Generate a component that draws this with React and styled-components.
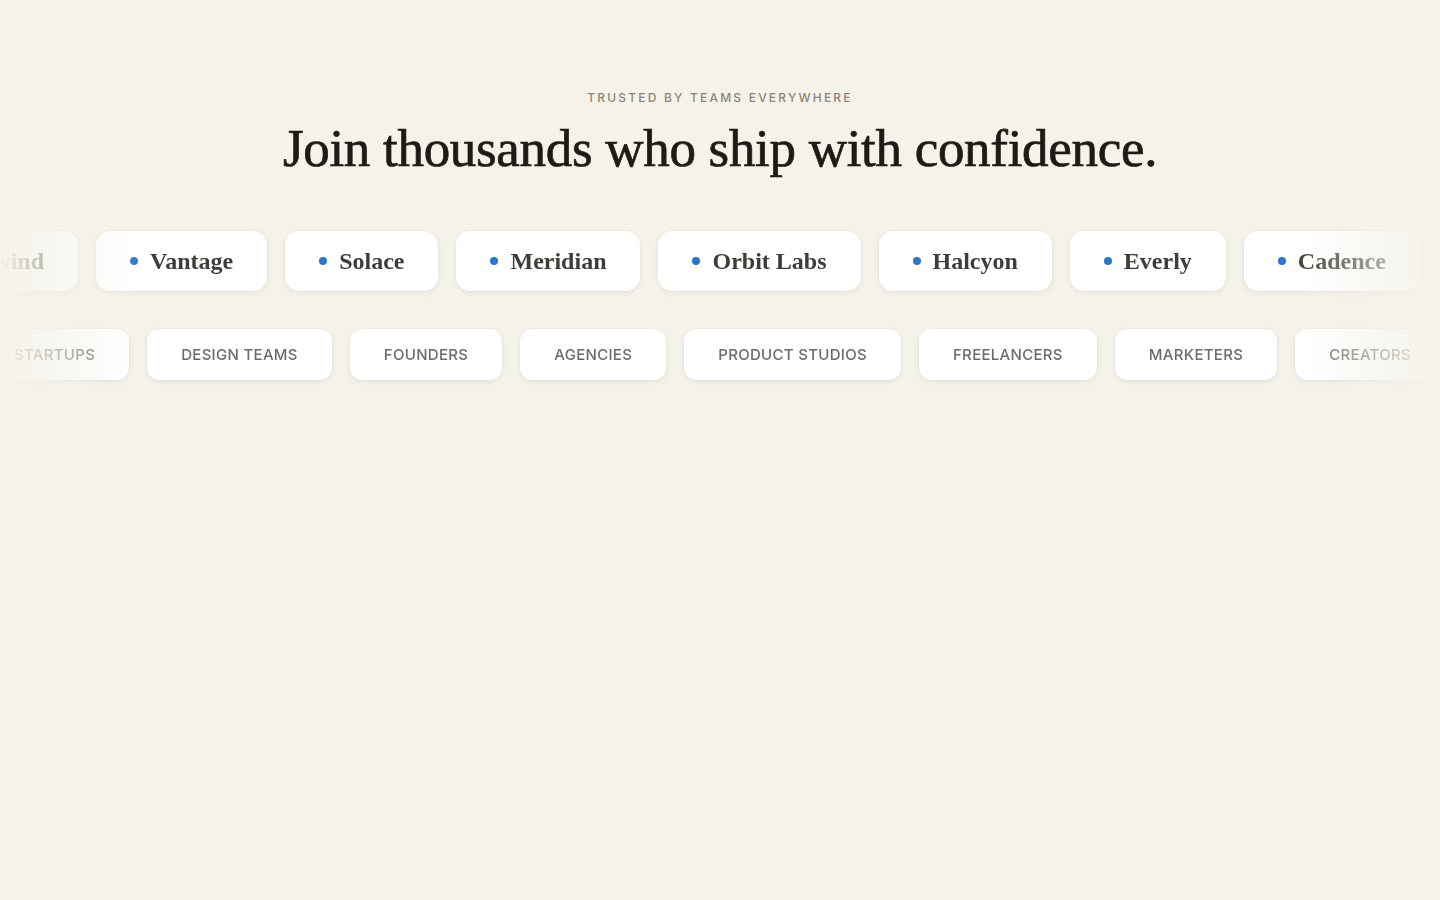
import React from "react";
import styled, { createGlobalStyle } from "styled-components";

const Global = createGlobalStyle`
  html, body { margin: 0; padding: 0; background: #f5f2ea; }
  body { font-family: "Inter", "Liberation Sans", sans-serif; -webkit-font-smoothing: antialiased; }
  * { box-sizing: border-box; }
`;

const Page = styled.main`
  min-height: 900px;
  background: #f5f2ea;
  padding-top: 89px;
  display: flex;
  flex-direction: column;
  align-items: center;
  overflow: hidden;
`;

const Eyebrow = styled.p`
  margin: 0;
  font-family: "Inter", "Liberation Sans", sans-serif;
  font-size: 12px;
  line-height: 18px;
  font-weight: 500;
  letter-spacing: 2.2px;
  text-transform: uppercase;
  color: #8b8576;
`;

const Heading = styled.h2`
  margin: 10px 0 0;
  font-family: "Liberation Serif", "Times New Roman", serif;
  font-weight: 400;
  font-size: 53px;
  line-height: 62px;
  letter-spacing: -0.3px;
  color: #1e1b16;
  -webkit-text-stroke: 0.7px #1e1b16;
  text-align: center;
`;

const Marquee = styled.div`
  width: 100%;
  overflow: hidden;
  margin-top: ${(p) => p.$top}px;
  padding: 4px 0 8px;
  -webkit-mask-image: linear-gradient(to right, transparent 0, #000 10%, #000 90%, transparent 100%);
  mask-image: linear-gradient(to right, transparent 0, #000 10%, #000 90%, transparent 100%);
`;

const Track = styled.div`
  display: flex;
  gap: 18px;
  width: max-content;
  transform: translateX(${(p) => p.$offset}px);
`;

const Chip = styled.div`
  flex-shrink: 0;
  height: 60px;
  padding: 0 34px;
  display: flex;
  align-items: center;
  gap: 12px;
  background: #ffffff;
  border-radius: 14px;
  box-shadow: 0 0 0 1px rgba(60, 50, 30, 0.03), 0 2px 6px rgba(60, 50, 30, 0.07);
  font-family: "Liberation Serif", "Times New Roman", serif;
  font-weight: 700;
  font-size: 24px;
  color: #403d38;
  white-space: nowrap;
`;

const Dot = styled.span`
  width: 8px;
  height: 8px;
  border-radius: 50%;
  background: #2a76cf;
  flex-shrink: 0;
`;

const Pill = styled.div`
  flex-shrink: 0;
  height: 51px;
  padding: 0 34px;
  display: flex;
  align-items: center;
  background: #ffffff;
  border-radius: 12px;
  box-shadow: 0 0 0 1px rgba(60, 50, 30, 0.03), 0 2px 6px rgba(60, 50, 30, 0.07);
  font-family: "Inter", "Liberation Sans", sans-serif;
  font-weight: 500;
  font-size: 15px;
  letter-spacing: 0.3px;
  text-transform: uppercase;
  color: #6e6c68;
  white-space: nowrap;
`;

const companies = ["Northwind", "Vantage", "Solace", "Meridian", "Orbit Labs", "Halcyon", "Everly", "Cadence", "Lumen", "Northwind"];
const audiences = ["Startups", "Design Teams", "Founders", "Agencies", "Product Studios", "Freelancers", "Marketers", "Creators", "Startups"];

export default function App() {
  return (
    <>
      <Global />
      <Page>
        <Eyebrow>Trusted by teams everywhere</Eyebrow>
        <Heading>Join thousands who ship with confidence.</Heading>
        <Marquee $top={48}>
          <Track $offset={-122}>
            {companies.map((c, i) => (
              <Chip key={i}>
                <Dot />
                {c}
              </Chip>
            ))}
          </Track>
        </Marquee>
        <Marquee $top={26}>
          <Track $offset={-20}>
            {audiences.map((a, i) => (
              <Pill key={i}>{a}</Pill>
            ))}
          </Track>
        </Marquee>
      </Page>
    </>
  );
}
